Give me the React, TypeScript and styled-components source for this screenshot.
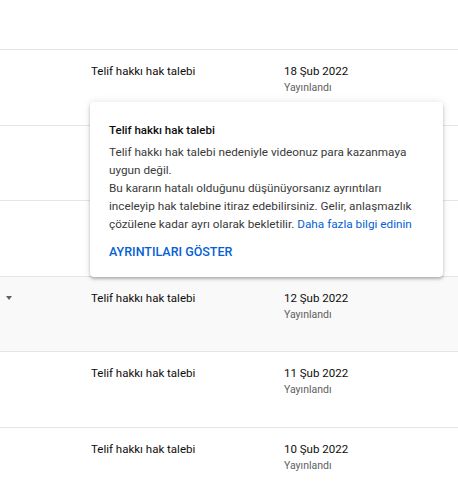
import React from 'react'
import styled, { createGlobalStyle } from 'styled-components'

const GlobalStyle = createGlobalStyle`
  html, body {
    margin: 0;
    padding: 0;
    background: #ffffff;
  }
  body {
    font-family: Roboto, "Noto Sans", Arial, sans-serif;
    color: #0d0d0d;
  }
`

type Claim = {
  date?: string
  status?: string
  expanded?: boolean
}

// rows under the open popup are left blank, their cells are covered anyway
const claims: Claim[] = [
  { date: '18 Şub 2022', status: 'Yayınlandı' },
  {},
  {},
  { date: '12 Şub 2022', status: 'Yayınlandı', expanded: true },
  { date: '11 Şub 2022', status: 'Yayınlandı' },
  { date: '10 Şub 2022', status: 'Yayınlandı' },
]

const App = () => {
  return (
    <>
      <GlobalStyle />
      <Table>
        <HeaderBand />
        {claims.map((c, i) => (
          <Row key={i} $active={c.expanded}>
            <Toggle>{c.expanded && <Caret />}</Toggle>
            <Cell>{c.date && 'Telif hakkı hak talebi'}</Cell>
            <Cell>
              {c.date && <DateText>{c.date}</DateText>}
              {c.status && <Status>{c.status}</Status>}
            </Cell>
            {i === 0 && (
              <Popup>
                <PopupTitle>Telif hakkı hak talebi</PopupTitle>
                <PopupBody>
                  Telif hakkı hak talebi nedeniyle videonuz para kazanmaya uygun değil.
                  <br />
                  Bu kararın hatalı olduğunu düşünüyorsanız ayrıntıları inceleyip hak talebine
                  itiraz edebilirsiniz. Gelir, anlaşmazlık çözülene kadar ayrı olarak bekletilir.{' '}
                  <Link>Daha fazla bilgi edinin</Link>
                </PopupBody>
                <ActionButton>AYRINTILARI GÖSTER</ActionButton>
              </Popup>
            )}
          </Row>
        ))}
      </Table>
    </>
  )
}

export default App

const Table = styled.div`
  width: 458px;
  height: 500px;
  overflow: hidden;
  display: flex;
  flex-direction: column;
`
const HeaderBand = styled.div`
  height: 49px;
  flex-shrink: 0;
  border-bottom: 1px solid #e5e5e5;
`
const Row = styled.div<{ $active?: boolean }>`
  position: relative;
  flex-shrink: 0;
  height: 75.6px;
  box-sizing: border-box;
  display: grid;
  grid-template-columns: 91px 193px 1fr;
  padding-top: 12px;
  border-bottom: 1px solid #e5e5e5;
  background: ${(p) => (p.$active ? '#f9f9f9' : '#ffffff')};
`
const Toggle = styled.div`
  padding-left: 6px;
  padding-top: 7px;
`
const Caret = styled.div`
  width: 0;
  height: 0;
  border-left: 3px solid transparent;
  border-right: 3px solid transparent;
  border-top: 4px solid #606060;
`
const Cell = styled.div`
  font-size: 11.5px;
  line-height: 18px;
  color: #0d0d0d;
`
const DateText = styled.div`
  font-size: 11.5px;
  line-height: 18px;
`
const Status = styled.div`
  font-size: 10.5px;
  line-height: 16px;
  color: #606060;
`
const Popup = styled.div`
  position: absolute;
  left: 90px;
  top: 52px;
  width: 353px;
  height: 175px;
  box-sizing: border-box;
  padding: 19px 19px 0 19px;
  background: #ffffff;
  border-radius: 4px;
  box-shadow: 0 2px 3px rgba(0, 0, 0, 0.25), 0 0 8px rgba(0, 0, 0, 0.1);
  z-index: 2;
`
const PopupTitle = styled.div`
  font-size: 11.5px;
  font-weight: 500;
  line-height: 18px;
  color: #0d0d0d;
  margin-bottom: 4px;
`
const PopupBody = styled.div`
  font-size: 11.75px;
  line-height: 18px;
  color: #3a3a3a;
`
const Link = styled.span`
  color: #065fd4;
`
const ActionButton = styled.div`
  margin-top: 10px;
  font-size: 12.5px;
  font-weight: 500;
  line-height: 18px;
  color: #065fd4;
`
